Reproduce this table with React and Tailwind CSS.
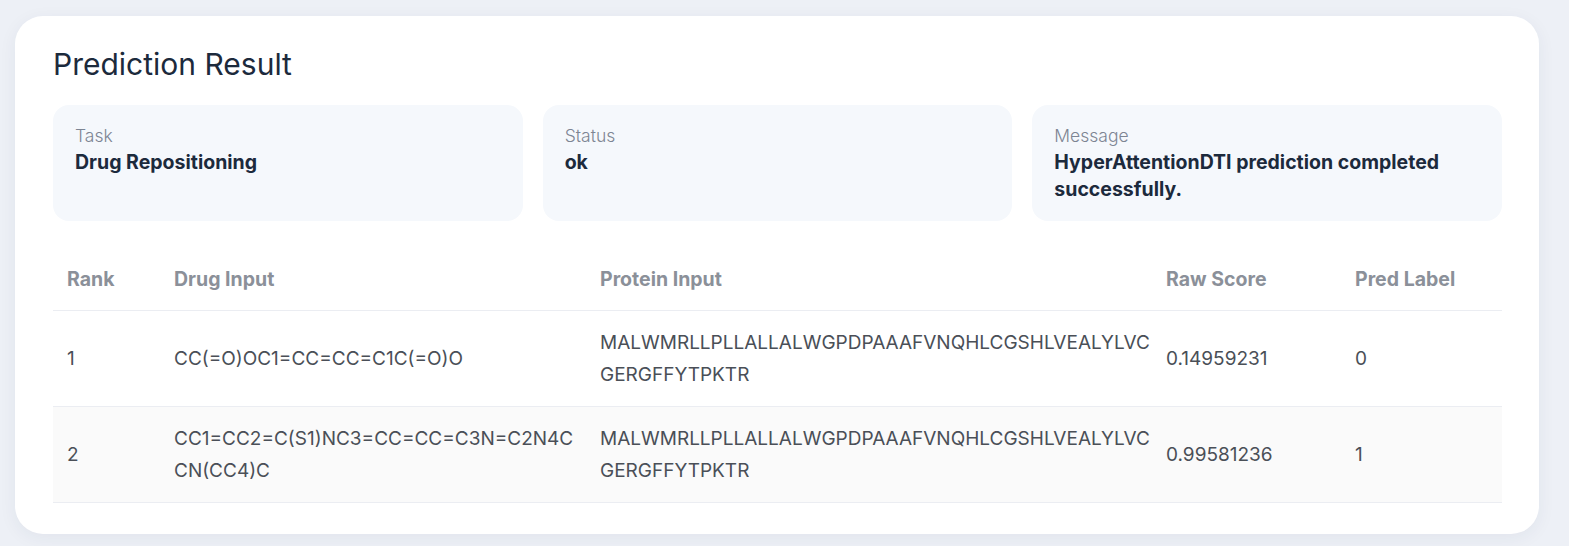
export default function App() {
  const protein = "MALWMRLLPLLALLALWGPDPAAAFVNQHLCGSHLVEALYLVCGERGFFYTPKTR";
  const rows = [
    { rank: 1, drug: "CC(=O)OC1=CC=CC=C1C(=O)O", protein, score: "0.14959231", label: "0", shade: false },
    { rank: 2, drug: "CC1=CC2=C(S1)NC3=CC=CC=C3N=C2N4CCN(CC4)C", protein, score: "0.99581236", label: "1", shade: true },
  ];
  const info = [
    { k: "Task", v: "Drug Repositioning" },
    { k: "Status", v: "ok" },
    { k: "Message", v: "HyperAttentionDTI prediction completed successfully." },
  ];
  const headers = ["Rank", "Drug Input", "Protein Input", "Raw Score", "Pred Label"];
  return (
    <div className="min-h-[546px] w-full bg-[#edf0f6] pt-[16px] pl-[15px] pr-[30px] pb-[13px] font-[Inter,sans-serif]">
      <div className="bg-white rounded-[28px] shadow-[0_4px_18px_rgba(30,50,90,0.06)] pl-[38px] pr-[37px] pt-[29px] pb-[31px]">
        <h1 className="text-[30px] leading-[38px] text-[#1c2a3c] font-normal">Prediction Result</h1>
        <div className="grid grid-cols-3 gap-[20px] mt-[22px]">
          {info.map((i) => (
            <div key={i.k} className="bg-[#f5f8fc] rounded-[16px] h-[116px] px-[22px] pt-[18px]">
              <div className="text-[17.5px] leading-[26px] text-[#7d8593] font-light">{i.k}</div>
              <div className="text-[19.5px] leading-[27px] font-bold text-[#1c2a3c]">{i.v}</div>
            </div>
          ))}
        </div>
        <table className="w-full mt-[29px] table-fixed border-collapse">
          <colgroup>
            <col className="w-[107px]" />
            <col className="w-[426px]" />
            <col className="w-[566px]" />
            <col className="w-[189px]" />
            <col />
          </colgroup>
          <thead>
            <tr className="border-b border-[#ebedf2]">
              {headers.map((h) => (
                <th key={h} className="text-left px-[14px] h-[60px] text-[19.5px] font-bold text-[#8b9099]">{h}</th>
              ))}
            </tr>
          </thead>
          <tbody>
            {rows.map((r) => (
              <tr key={r.rank} className={r.shade ? "border-b border-[#ebedf2] bg-[#fafafa]" : "border-b border-[#ebedf2] bg-white"}>
                <td className="pl-[14px] pr-[14px] pt-[2px] text-[19px] text-[#4a4f57]">{r.rank}</td>
                <td className="pl-[14px] pr-[6px] pt-[16px] pb-[15px] text-[19px] leading-[32px] text-[#4a4f57] break-all">{r.drug}</td>
                <td className="pl-[14px] pr-0 pt-[16px] pb-[15px] text-[19px] leading-[32px] text-[#4a4f57] break-all">{r.protein}</td>
                <td className="px-[14px] pt-[2px] text-[19px] text-[#4a4f57]">{r.score}</td>
                <td className="px-[14px] pt-[2px] text-[19px] text-[#4a4f57]">{r.label}</td>
              </tr>
            ))}
          </tbody>
        </table>
      </div>
    </div>
  );
}
